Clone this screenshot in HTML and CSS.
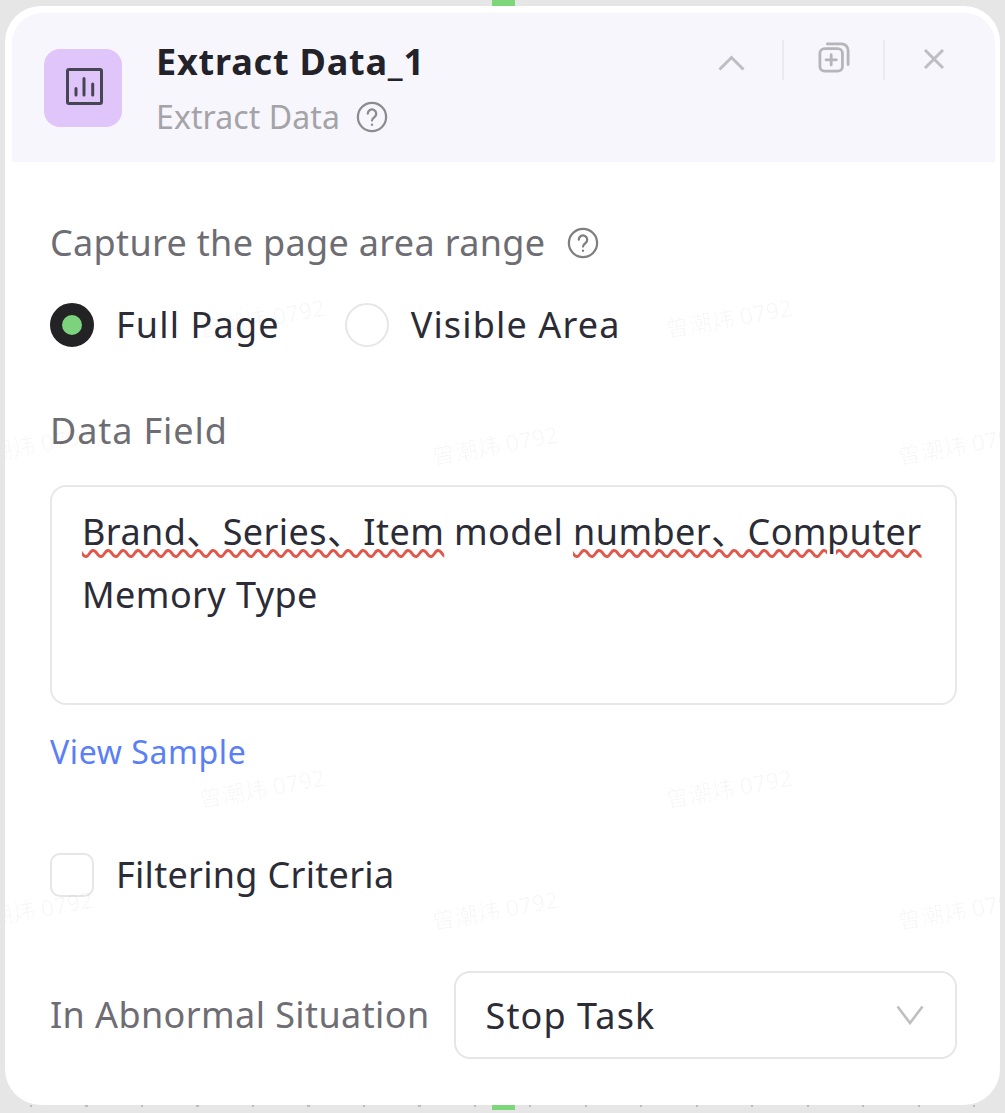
FILE: index.html
```html
<!DOCTYPE html>
<html lang="en">
<head>
<meta charset="utf-8">
<title>Extract Data_1</title>
<link rel="stylesheet" href="styles.css">
</head>
<body>
<div class="tick tick-top"></div>
<div class="card">
  <header class="header">
    <div class="node-icon">
      <svg width="40" height="40" viewBox="0 0 40 40" fill="none" stroke="#454553" stroke-linecap="round">
        <rect x="4.500" y="1.500" width="34" height="34" rx="1.500" stroke-width="3"/>
        <path d="M13 20.500v6.500M21 10.500v16.500M29.700 16v11" stroke-width="3"/>
      </svg>
    </div>
    <div class="titles">
      <div class="title">Extract Data_1</div>
      <div class="subtitle">Extract Data
        <svg class="help" width="32" height="32" viewBox="0 0 34 34" fill="none" stroke="#8c8c8c" stroke-width="2.400" stroke-linecap="round">
          <circle cx="17" cy="17" r="15"/>
          <path d="M12.500 13.500a4.500 4.500 0 1 1 7 3.700c-1.600 1.100-2.500 1.800-2.500 3.600"/>
          <path d="M17 25v.4"/>
        </svg>
      </div>
    </div>
    <div class="actions">
      <svg class="act-up" width="27" height="16" viewBox="0 0 27 16" fill="none" stroke="#bdbdc2" stroke-width="3"><path d="M1.500 14.500 13.500 2.500l12 12"/></svg>
      <span class="sep sep-a"></span>
      <svg class="act-copy" width="32" height="31" viewBox="0 0 34 33" fill="none" stroke="#b5b5ba" stroke-width="3" stroke-linecap="round">
        <rect x="2" y="7" width="24" height="24" rx="5"/>
        <path d="M10 2h15a7 7 0 0 1 7 7v15"/>
        <path d="M14 13.500v11M8.500 19h11"/>
      </svg>
      <span class="sep sep-b"></span>
      <svg class="act-close" width="22" height="22" viewBox="0 0 22 22" fill="none" stroke="#bdbdc2" stroke-width="3"><path d="M2 2l18 18M20 2 2 20"/></svg>
    </div>
  </header>
  <main class="form">
    <div class="label label-first">Capture the page area range
      <svg class="help" width="32" height="32" viewBox="0 0 34 34" fill="none" stroke="#7f7f7f" stroke-width="2.400" stroke-linecap="round">
        <circle cx="17" cy="17" r="15"/>
        <path d="M12.500 13.500a4.500 4.500 0 1 1 7 3.700c-1.600 1.100-2.500 1.800-2.500 3.600"/>
        <path d="M17 25v.4"/>
      </svg>
    </div>
    <div class="radios">
      <div class="option wide"><span class="radio on"></span>Full Page</div>
      <div class="option wide"><span class="radio"></span>Visible Area</div>
    </div>
    <div class="label label-field">Data Field</div>
    <div class="textarea"><span class="typo">Brand、Series、Item</span> model <span class="typo">number、Computer</span> Memory Type</div>
    <a class="link">View Sample</a>
    <div class="option check-row"><span class="check"></span>Filtering Criteria</div>
    <div class="select-row">
      <div class="label label-abn">In Abnormal Situation</div>
      <div class="select"><span class="select-value">Stop Task</span>
        <svg width="28" height="20" viewBox="0 0 28 20" fill="none" stroke="#bfbfbf" stroke-width="2.600"><path d="M1.500 1.500 14 18 26.500 1.500"/></svg>
      </div>
    </div>
  </main>
  <div class="wm wm1">曾潮炜 0792</div>
  <div class="wm wm2">曾潮炜 0792</div>
  <div class="wm wm3">曾潮炜 0792</div>
  <div class="wm wm4">曾潮炜 0792</div>
  <div class="wm wm5">曾潮炜 0792</div>
  <div class="wm wm6">曾潮炜 0792</div>
  <div class="wm wm7">曾潮炜 0792</div>
  <div class="wm wm8">曾潮炜 0792</div>
  <div class="wm wm9">曾潮炜 0792</div>
  <div class="wm wm10">曾潮炜 0792</div>
</div>
<div class="dots"></div>
<div class="tick tick-bottom"></div>
</body>
</html>
```

FILE: styles.css
```css
* { box-sizing: border-box; }
html, body { margin: 0; height: 1113px; overflow: hidden; }
body {
  background: #e6e6e6;
  padding: 6px 5px 8px;
  font-family: "Noto Sans", "Noto Sans CJK SC", sans-serif;
  color: #2c2c36;
  position: relative;
}
.tick { position: absolute; left: 492px; width: 23px; height: 6px; background: #7ed67a; }
.tick-top { top: 0; }
.tick-bottom { top: 1105px; height: 5px; }
.dots {
  position: absolute;
  left: 30px; right: 0; top: 1105px; height: 2px;
  background: repeating-linear-gradient(90deg, #bcbcbc 0 2px, transparent 2px 55.500px);
}
.card {
  position: relative;
  overflow: hidden;
  height: 1099px;
  background: #fff;
  border-radius: 36px;
  padding: 7px 5px 0 7px;
}
.header {
  display: flex;
  height: 149px;
  background: #f8f6fd;
  border-radius: 30px 30px 0 0;
  padding: 36px 0 0 32px;
}
.node-icon {
  width: 78px; height: 78px;
  background: #dfc5fa;
  border-radius: 16px;
  display: flex; align-items: center; justify-content: center;
}
.titles { margin-left: 34px; margin-top: -13px; }
.title { font-size: 36px; font-weight: 700; line-height: 52px; color: #222228; letter-spacing: .8px; }
.subtitle { font-size: 32px; line-height: 52px; color: #a3a3a8; display: flex; align-items: center; gap: 16px; margin-top: 3px; letter-spacing: .1px; }
.actions { margin-left: auto; margin-top: -9px; padding-right: 50px; display: flex; align-items: flex-start; }
.act-up { margin: 15px 37px 0 0; }
.act-copy { margin: 2px 33px 0 34px; }
.act-close { margin: 8px 0 0 38px; }
.sep { flex: none; width: 2px; height: 40px; background: #eceaf1; }
.form { padding: 0 38px; }
.label { font-size: 36px; line-height: 48px; color: #6d6d73; letter-spacing: .33px; }
.label-first { margin-top: 57px; display: flex; align-items: center; gap: 22px; }
.radios { display: flex; gap: 65px; margin-top: 34px; }
.option { display: flex; align-items: center; font-size: 36px; line-height: 48px; color: #2c2c36; letter-spacing: .3px; }
.wide { letter-spacing: 1.15px; }
.radio {
  width: 44px; height: 44px; border-radius: 50%;
  border: 2px solid #e6e6e6; margin-right: 22px;
  background: #fff; flex: none;
}
.radio.on { background: #7dd37d; border: 12px solid #232326; }
.label-field { margin-top: 58px; letter-spacing: .9px; }
.label-abn { letter-spacing: .4px; }
.textarea {
  margin-top: 30px;
  height: 220px;
  border: 2px solid #e8e8e8;
  border-radius: 16px;
  padding: 13px 30px;
  font-size: 36px;
  line-height: 63px;
  color: #2c2c36;
  letter-spacing: .42px;
}
.typo { text-decoration: underline wavy #e0584c 3px; text-underline-offset: 4px; }
.link { display: block; margin-top: 24px; font-size: 32px; line-height: 46px; color: #5b80f5; letter-spacing: .6px; }
.check-row { margin-top: 76px; }
.check {
  width: 44px; height: 44px; border: 2px solid #e6e6e6; border-radius: 10px;
  margin-right: 22px; flex: none; background: #fff;
}
.select-row { display: flex; align-items: center; gap: 24px; margin-top: 72px; }
.select {
  flex: 1;
  height: 88px;
  border: 2px solid #e6e6e6;
  border-radius: 16px;
  display: flex; align-items: center; justify-content: space-between;
  padding: 0 31px 0 30px;
  font-size: 36px;
  color: #2c2c36;
}
.select-value { letter-spacing: 1.1px; }
.wm {
  position: absolute;
  font-size: 23px;
  line-height: 30px;
  color: rgba(0, 0, 0, .035);
  transform: rotate(-10deg);
  white-space: nowrap;
  pointer-events: none;
}
.wm1 { left: 193px; top: 297px; }
.wm2 { left: 660px; top: 297px; }
.wm3 { left: -39px; top: 424px; }
.wm4 { left: 426px; top: 424px; }
.wm5 { left: 892px; top: 424px; }
.wm6 { left: 193px; top: 767px; }
.wm7 { left: 660px; top: 767px; }
.wm8 { left: -39px; top: 889px; }
.wm9 { left: 426px; top: 889px; }
.wm10 { left: 892px; top: 889px; }
```
